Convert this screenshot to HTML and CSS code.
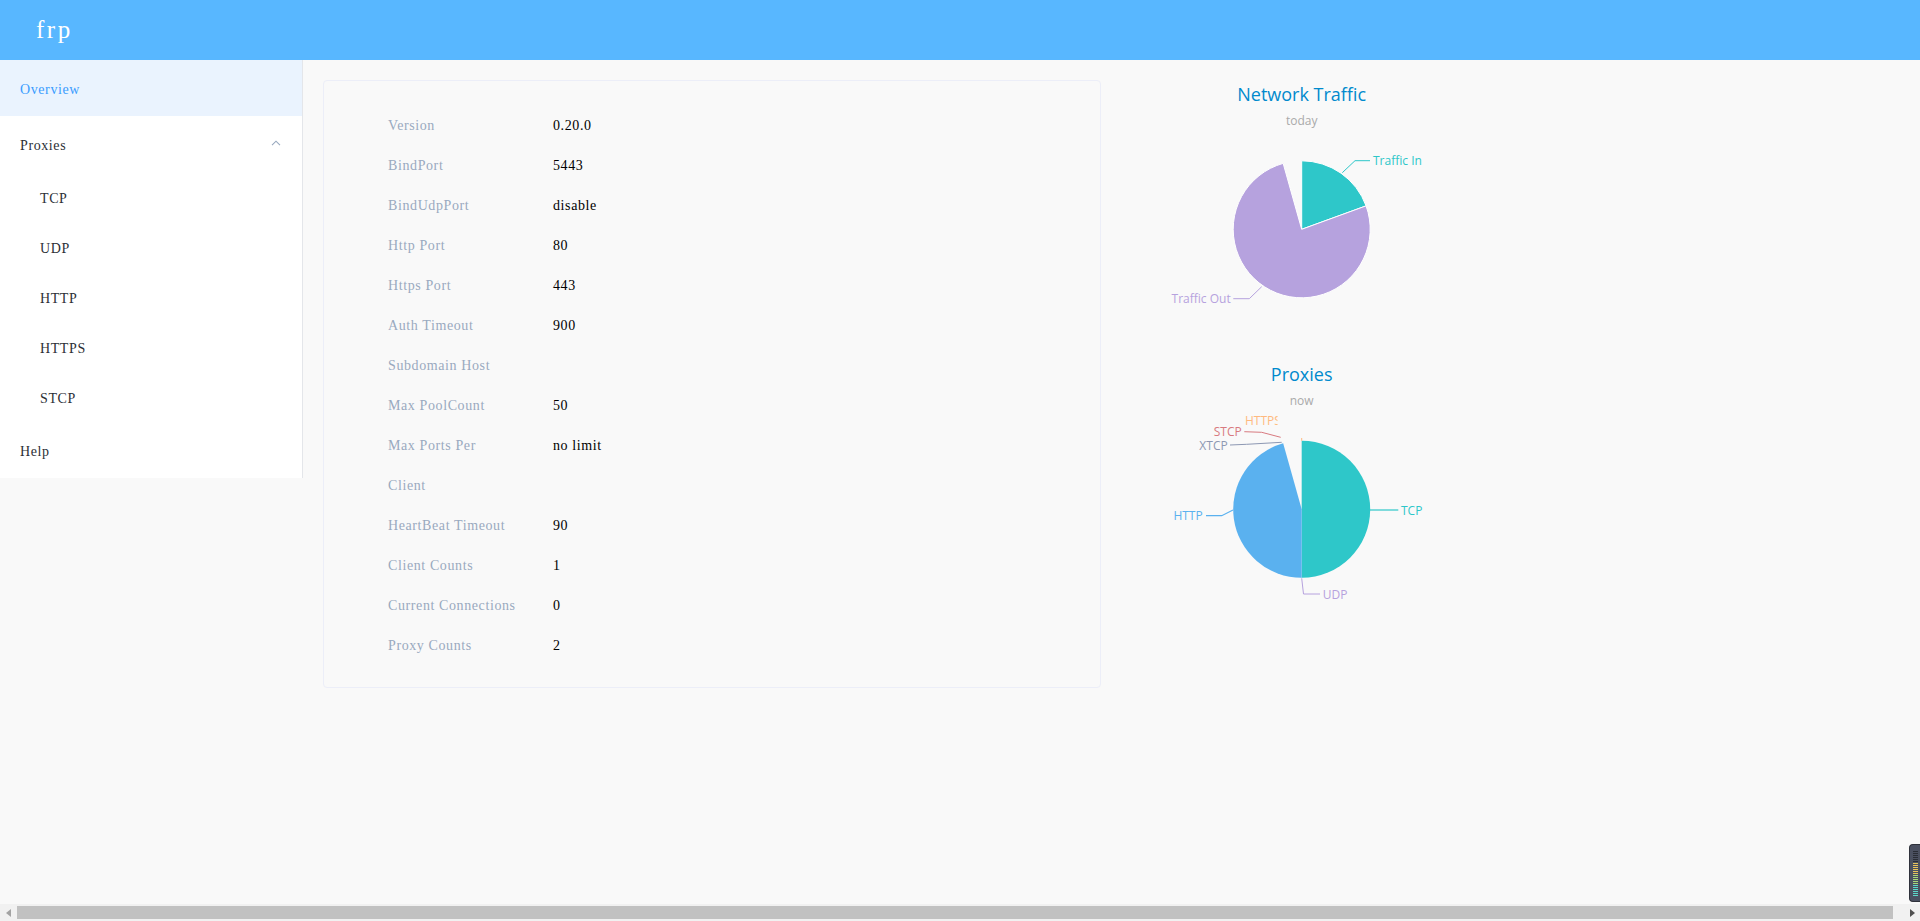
FILE: index.html
```html
<!DOCTYPE html>
<html>
<head>
<meta charset="utf-8">
<title>frp</title>
<link rel="stylesheet" href="styles.css">
</head>
<body>
<div class="page">
  <header class="topbar"><span class="brand">frp</span></header>
  <div class="content">
    <nav class="sidebar">
      <div class="menu-item active">Overview</div>
      <div class="submenu-title"><span>Proxies</span>
        <svg class="chevron" width="10" height="6" viewBox="0 0 10 6"><path d="M1 5.2 L5 1.2 L9 5.2" fill="none" stroke="#97a8be" stroke-width="1.1"/></svg>
      </div>
      <div class="sub-item">TCP</div>
      <div class="sub-item">UDP</div>
      <div class="sub-item">HTTP</div>
      <div class="sub-item">HTTPS</div>
      <div class="sub-item">STCP</div>
      <div class="menu-item">Help</div>
    </nav>
    <main class="main">
      <section class="card">
        <div class="info-grid">
          <div class="lbl">Version</div><div class="val">0.20.0</div>
          <div class="lbl">BindPort</div><div class="val">5443</div>
          <div class="lbl">BindUdpPort</div><div class="val">disable</div>
          <div class="lbl">Http Port</div><div class="val">80</div>
          <div class="lbl">Https Port</div><div class="val">443</div>
          <div class="lbl">Auth Timeout</div><div class="val">900</div>
          <div class="lbl">Subdomain Host</div><div class="val"></div>
          <div class="lbl">Max PoolCount</div><div class="val">50</div>
          <div class="lbl">Max Ports Per<br>Client</div><div class="val">no limit</div>
          <div class="lbl">HeartBeat Timeout</div><div class="val">90</div>
          <div class="lbl">Client Counts</div><div class="val">1</div>
          <div class="lbl">Current Connections</div><div class="val">0</div>
          <div class="lbl">Proxy Counts</div><div class="val">2</div>
        </div>
      </section>
      <section class="charts">
        <svg class="chart" width="400" height="280" viewBox="0 0 400 280">
          <text class="c-title" x="200.7" y="14">Network Traffic</text>
          <text class="c-sub" x="200.7" y="40">today</text>
          <path d="M200.7,149.3 L200.7,80.8 A68.5,68.5 0 0 1 265.07,125.87 Z" fill="#2ec7c9" stroke="#fff" stroke-width="1"/>
          <path d="M200.7,149.3 L265.07,125.87 A68.5,68.5 0 1 1 182.16,83.36 Z" fill="#b6a2de" stroke="#fff" stroke-width="1"/>
          <polyline points="241.3,92.7 254,80.7 269,80.7" fill="none" stroke="#2ec7c9" stroke-width="1"/>
          <text class="c-lbl" x="272" y="80.7" fill="#2ec7c9">Traffic In</text>
          <polyline points="160.7,206.7 148.3,218.7 132.3,218.7" fill="none" stroke="#b6a2de" stroke-width="1"/>
          <text class="c-lbl end" x="129.7" y="218.7" fill="#b6a2de">Traffic Out</text>
        </svg>
        <svg class="chart" width="400" height="280" viewBox="0 0 400 280">
          <defs><clipPath id="cut"><rect x="140" y="50" width="36.5" height="20"/></clipPath></defs>
          <text class="c-title" x="200.7" y="14">Proxies</text>
          <text class="c-sub" x="200.7" y="40">now</text>
          <path d="M200.7,149.3 L200.7,80.8 A68.5,68.5 0 0 1 200.7,217.8 Z" fill="#2ec7c9"/>
          <path d="M200.7,149.3 L200.7,217.8 A68.5,68.5 0 0 1 182.16,83.36 Z" fill="#5ab1ef"/>
          <polyline points="269,150 297.3,150" fill="none" stroke="#2ec7c9" stroke-width="1.2"/>
          <text class="c-lbl" x="300" y="150" fill="#2ec7c9">TCP</text>
          <polyline points="200.7,218.3 202.5,234 219,234" fill="none" stroke="#b6a2de" stroke-width="1"/>
          <text class="c-lbl" x="221.7" y="234" fill="#b6a2de">UDP</text>
          <polyline points="132,150 120.7,155.7 105,155.7" fill="none" stroke="#5ab1ef" stroke-width="1.2"/>
          <text class="c-lbl end" x="101.7" y="155.7" fill="#5ab1ef">HTTP</text>
          <polyline points="129,85 145.7,84.3 180.7,82.3" fill="none" stroke="#8d98b3" stroke-width="1"/>
          <text class="c-lbl end" x="126.7" y="85" fill="#8d98b3">XTCP</text>
          <polyline points="143.3,71.7 160.7,72.3 179.7,77.3" fill="none" stroke="#d87a80" stroke-width="1"/>
          <text class="c-lbl end" x="140.7" y="71.7" fill="#d87a80">STCP</text>
          <polyline points="200.7,80.8 200.7,78" fill="none" stroke="#ffb980" stroke-width="1"/>
          <text class="c-lbl" x="144" y="60" fill="#ffb980" clip-path="url(#cut)">HTTPS</text>
        </svg>
      </section>
    </main>
  </div>
  <div class="hscroll">
    <div class="sb-btn"><svg width="6" height="8" viewBox="0 0 6 8"><path d="M5 0 L0 4 L5 8 Z" fill="#a3a3a3"/></svg></div>
    <div class="sb-track"><div class="sb-thumb"></div></div>
    <div class="sb-btn"><svg width="6" height="8" viewBox="0 0 6 8"><path d="M1 0 L6 4 L1 8 Z" fill="#505050"/></svg></div>
  </div>
  <div class="meter"><div class="meter-bars"></div></div>
</div>
</body>
</html>
```
FILE: styles.css
```css
* { box-sizing: border-box; }
html, body { margin: 0; padding: 0; }
body {
  width: 1920px;
  height: 921px;
  overflow: hidden;
  font-family: "Liberation Serif", "DejaVu Serif", serif;
  font-size: 14px;
  letter-spacing: 0.6px;
  background: #f9f9f9;
}
.page {
  position: relative;
  height: 921px;
  display: flex;
  flex-direction: column;
}
.topbar {
  height: 60px;
  flex: 0 0 60px;
  background: #58b7ff;
  display: flex;
  align-items: center;
  padding-left: 36px;
}
.brand {
  color: #fff;
  font-size: 25px;
  letter-spacing: 2.5px;
  line-height: 1;
  margin-top: -2px;
}
.content {
  flex: 1;
  display: flex;
  align-items: flex-start;
  background: #f9f9f9;
}
.sidebar {
  width: 303px;
  flex: 0 0 303px;
  background: #fff;
  border-right: 1px solid #e4e6ea;
}
.menu-item, .submenu-title {
  height: 56px;
  line-height: 53px;
  padding-top: 3px;
  padding-left: 20px;
  color: #2b2f36;
}
.menu-item.active {
  background: #eaf3fe;
  color: #3a9cff;
}
.submenu-title {
  display: flex;
  justify-content: space-between;
  align-items: center;
  padding-right: 21px;
}
.chevron { display: block; margin-top: -5px; }
.sub-item {
  height: 50px;
  line-height: 47px;
  padding-top: 3px;
  padding-left: 40px;
  color: #2b2f36;
}
.main {
  flex: 1;
  display: flex;
  align-items: flex-start;
  padding: 20px;
}
.card {
  width: 778px;
  flex: 0 0 778px;
  border: 1px solid #eceef8;
  border-radius: 4px;
  padding: 25px 0 21px 64px;
}
.info-grid {
  display: grid;
  grid-template-columns: 165px 1fr;
  line-height: 40px;
}
.lbl {
  color: #99a9bf;
  padding-right: 20px;
}
.val {
  color: #000;
}
.charts {
  width: 400px;
  flex: 0 0 400px;
  display: flex;
  flex-direction: column;
}
.chart { display: block; letter-spacing: 0; }
.c-title {
  font-family: "Open Sans", "Noto Sans", sans-serif;
  font-size: 18px;
  fill: #008acd;
  text-anchor: middle;
  dominant-baseline: central;
}
.c-sub {
  font-family: "Open Sans", "Noto Sans", sans-serif;
  font-size: 12px;
  fill: #aaaaaa;
  text-anchor: middle;
  dominant-baseline: central;
}
.c-lbl {
  font-family: "Open Sans", "Noto Sans", sans-serif;
  font-size: 12px;
  dominant-baseline: central;
}
.c-lbl.end { text-anchor: end; }
.hscroll {
  flex: 0 0 17px;
  height: 17px;
  display: flex;
  background: #f1f1f1;
}
.sb-btn {
  width: 17px;
  flex: 0 0 17px;
  display: flex;
  align-items: center;
  justify-content: center;
}
.sb-track {
  flex: 1;
  padding: 2px 10px 2px 0;
}
.sb-thumb {
  height: 13px;
  background: #c1c1c1;
}
.meter {
  position: absolute;
  right: 0;
  top: 844px;
  width: 11px;
  height: 58px;
  background: #4b5060;
  border-radius: 4px 0 0 4px;
  border: 1px solid #2f323b;
  border-right: none;
  padding: 6px 0 0 3px;
}
.meter-bars {
  width: 5px;
  height: 46px;
  background:
    repeating-linear-gradient(to bottom, transparent 0 1px, #4b5060 1px 2px),
    linear-gradient(to bottom, #2a2d36 0 25%, #e8c45a 25% 50%, #a8d878 50% 75%, #5cd8c8 75% 100%);
}
```
